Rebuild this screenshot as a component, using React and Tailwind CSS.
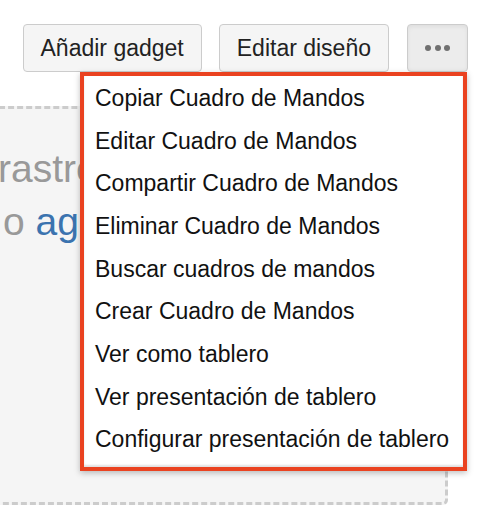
import { useState } from 'react';

const ITEMS = [
  'Copiar Cuadro de Mandos',
  'Editar Cuadro de Mandos',
  'Compartir Cuadro de Mandos',
  'Eliminar Cuadro de Mandos',
  'Buscar cuadros de mandos',
  'Crear Cuadro de Mandos',
  'Ver como tablero',
  'Ver presentación de tablero',
  'Configurar presentación de tablero',
];

const font = { fontFamily: '"Liberation Sans", Arial, sans-serif' };

export default function App() {
  const [open, setOpen] = useState(true);

  return (
    <div className="relative w-[487px] h-[512px] overflow-hidden bg-white text-[#222]" style={font}>
      {/* Barra de acciones */}
      <div className="flex justify-end gap-[17px] pt-[24px] pr-[19px]">
        <button className="h-[48px] px-[17px] border border-[#ccc] rounded-[4px] bg-[#f5f5f5] text-[23px] text-[#222]">
          Añadir gadget
        </button>
        <button className="h-[48px] px-[17px] border border-[#ccc] rounded-[4px] bg-[#f5f5f5] text-[23px] text-[#222]">
          Editar diseño
        </button>
        <button
          onClick={() => setOpen(!open)}
          className="ml-px h-[48px] w-[61px] flex items-center justify-center gap-[3.5px] border border-[#ccc] rounded-[4px] bg-[#ececec] shadow-[inset_0_2px_4px_rgba(0,0,0,0.06)]"
        >
          <span className="w-[6px] h-[6px] rounded-full bg-[#707070]" />
          <span className="w-[6px] h-[6px] rounded-full bg-[#707070]" />
          <span className="w-[6px] h-[6px] rounded-full bg-[#707070]" />
        </button>
      </div>

      {/* Zona vacía del cuadro de mandos */}
      <div className="mt-[34px] -ml-[10px] mr-[39px] h-[399px] border-[3px] border-dashed border-[#ccc] rounded-br-[5px] bg-[#f5f5f5] pt-[33px] text-[39px] leading-[53px] whitespace-nowrap overflow-hidden">
        <div className="-ml-[34px] text-[#999]">Arrastre un gadget aquí</div>
        <div className="ml-[10px] text-[#999]">
          o <a className="text-[#3b73af]">agregue un nuevo gadget</a>
        </div>
      </div>

      {/* Menú desplegable */}
      {open && (
        <div className="absolute top-[72px] left-[80px] w-[387px] border-4 border-[#ea4220] bg-white shadow-[0_2px_6px_rgba(0,0,0,0.25)]">
          <ul className="pt-px pb-[6px] shadow-[inset_0_-2px_2px_rgba(0,0,0,0.12)]">
            {ITEMS.map((item) => (
              <li key={item} className="h-[42.67px] leading-[42.67px] pl-[11px] text-[23px] text-[#111] whitespace-nowrap">
                {item}
              </li>
            ))}
          </ul>
        </div>
      )}
    </div>
  );
}
